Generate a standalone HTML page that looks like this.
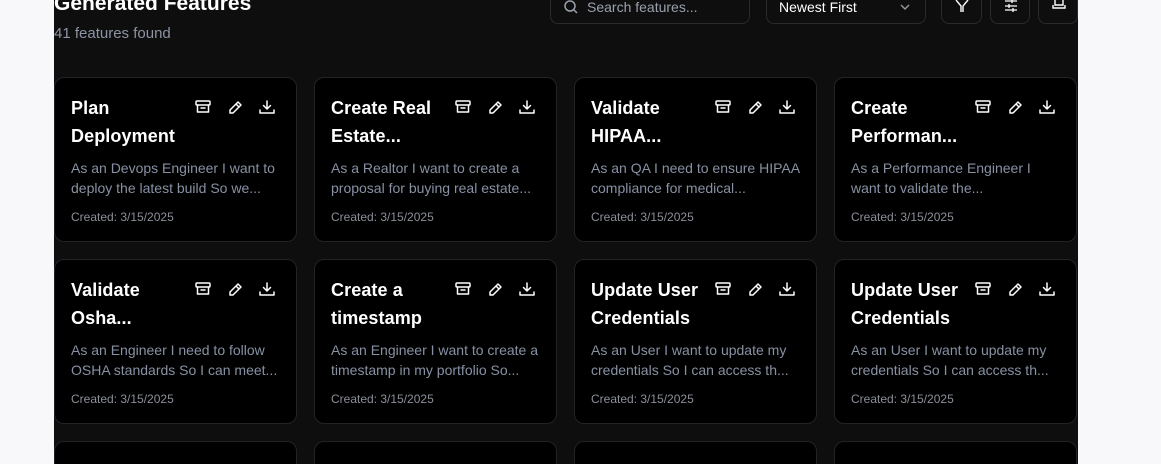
<!DOCTYPE html>
<html><head><style>
html,body{margin:0;width:1161px;height:464px;overflow:hidden}
body{background:#f8f8fa;font-family:"Liberation Sans",sans-serif;position:relative}
.main{position:absolute;left:54px;top:0;width:1024px;height:464px;background:#0e0e0f;overflow:hidden}
h1{position:absolute;left:54px;top:-8px;margin:0;color:#fff;font-size:21px;font-weight:bold}
.sub{position:absolute;left:54px;top:25px;color:#8c93a3;font-size:15px}
.box{position:absolute;top:-10px;height:34px;border:1px solid #2a2a2d;border-radius:8px;box-sizing:border-box;color:#9aa0ac;font-size:14px}
#g{position:absolute;left:0;top:0;width:1161px;height:464px;overflow:hidden}
.card{position:absolute;width:243px;height:165px;background:#000;border:1px solid #232326;border-radius:10px;box-sizing:border-box}
.t{position:absolute;left:16px;top:16px;width:118px;color:#fff;font-size:18px;font-weight:bold;line-height:28px;letter-spacing:0.1px}
.d{position:absolute;left:16px;top:80px;width:212px;color:#8891a3;font-size:14px;line-height:20px;height:40px;overflow:hidden}
.c{position:absolute;left:16px;top:132px;color:#8b8f98;font-size:12px}
.ic{position:absolute;top:21px;left:140px}
</style></head><body>
<div class="main"></div>
<h1>Generated Features</h1>
<div class="sub">41 features found</div>
<div class="box" style="left:550px;width:200px"><svg style="position:absolute;left:12px;top:8px" width="16" height="16" viewBox="0 0 16 16" fill="none" stroke="#9aa0ac" stroke-width="1.5"><circle cx="7" cy="7" r="5"/><path d="M11 11l3 3"/></svg><span style="position:absolute;left:36px;top:8px">Search features...</span></div>
<div class="box" style="left:766px;width:160px;color:#fff"><span style="position:absolute;left:12px;top:8px">Newest First</span><svg style="position:absolute;right:14px;top:12px" width="12" height="8" viewBox="0 0 12 8" fill="none" stroke="#999" stroke-width="1.4"><path d="M2 2l4 4 4-4"/></svg></div>
<div class="box" style="left:941px;width:41px"><svg style="position:absolute;left:13px;top:9px" width="14" height="12" viewBox="0 0 14 12" fill="none" stroke="#fff" stroke-width="1.4"><path d="M1 0l5 6v6M13 0L8 6v6"/></svg></div>
<div class="box" style="left:990px;width:40px"><svg style="position:absolute;left:13px;top:7px" width="14" height="14" viewBox="0 0 14 14" fill="none" stroke="#fff" stroke-width="1.3"><path d="M1 3h12M1 8h12M1 12h12M5 6v4M9 10v4M8 1v4"/></svg></div>
<div class="box" style="left:1038px;width:40px"><svg style="position:absolute;left:13px;top:6px" width="14" height="12" viewBox="0 0 14 12" fill="none" stroke="#fff" stroke-width="1.4"><path d="M3 0v8h8V0M1 8v3h12V8"/></svg></div>
<div id="g"></div>
<script>
const data=[["Plan Deployment","As an Devops Engineer I want to deploy the latest build So we..."],["Create Real Estate...","As a Realtor I want to create a proposal for buying real estate..."],["Validate HIPAA...","As an QA I need to ensure HIPAA compliance for medical..."],["Create Performan...","As a Performance Engineer I want to validate the..."],["Validate Osha...","As an Engineer I need to follow OSHA standards So I can meet..."],["Create a timestamp","As an Engineer I want to create a timestamp in my portfolio So..."],["Update User Credentials","As an User I want to update my credentials So I can access th..."],["Update User Credentials","As an User I want to update my credentials So I can access th..."],["",""],["",""],["",""],["",""]];
const icons='<svg class="ic" width="90" height="16" viewBox="0 0 90 16" fill="none" stroke="#fff" stroke-width="1.5" stroke-linecap="round" stroke-linejoin="round"><rect x="1" y="2" width="14" height="4" rx="1"/><path d="M2.5 6v7h11V6M6 9h4"/><path d="M43 3l3 3-8 8h-3v-3zM41 5l3 3"/><path d="M72 2v8M68.5 6.5L72 10l3.5-3.5M65 11v3h14v-3"/></svg>';
let h='';data.forEach((d,i)=>{const x=54+(i%4)*260,y=77+Math.floor(i/4)*182;
h+=`<div class="card" style="left:${x}px;top:${y}px">`+(d[0]?`<div class="t">${d[0]}</div>${icons}<div class="d">${d[1]}</div><div class="c">Created: 3/15/2025</div>`:'')+'</div>';});
document.getElementById('g').innerHTML=h;
</script>
</body></html>
